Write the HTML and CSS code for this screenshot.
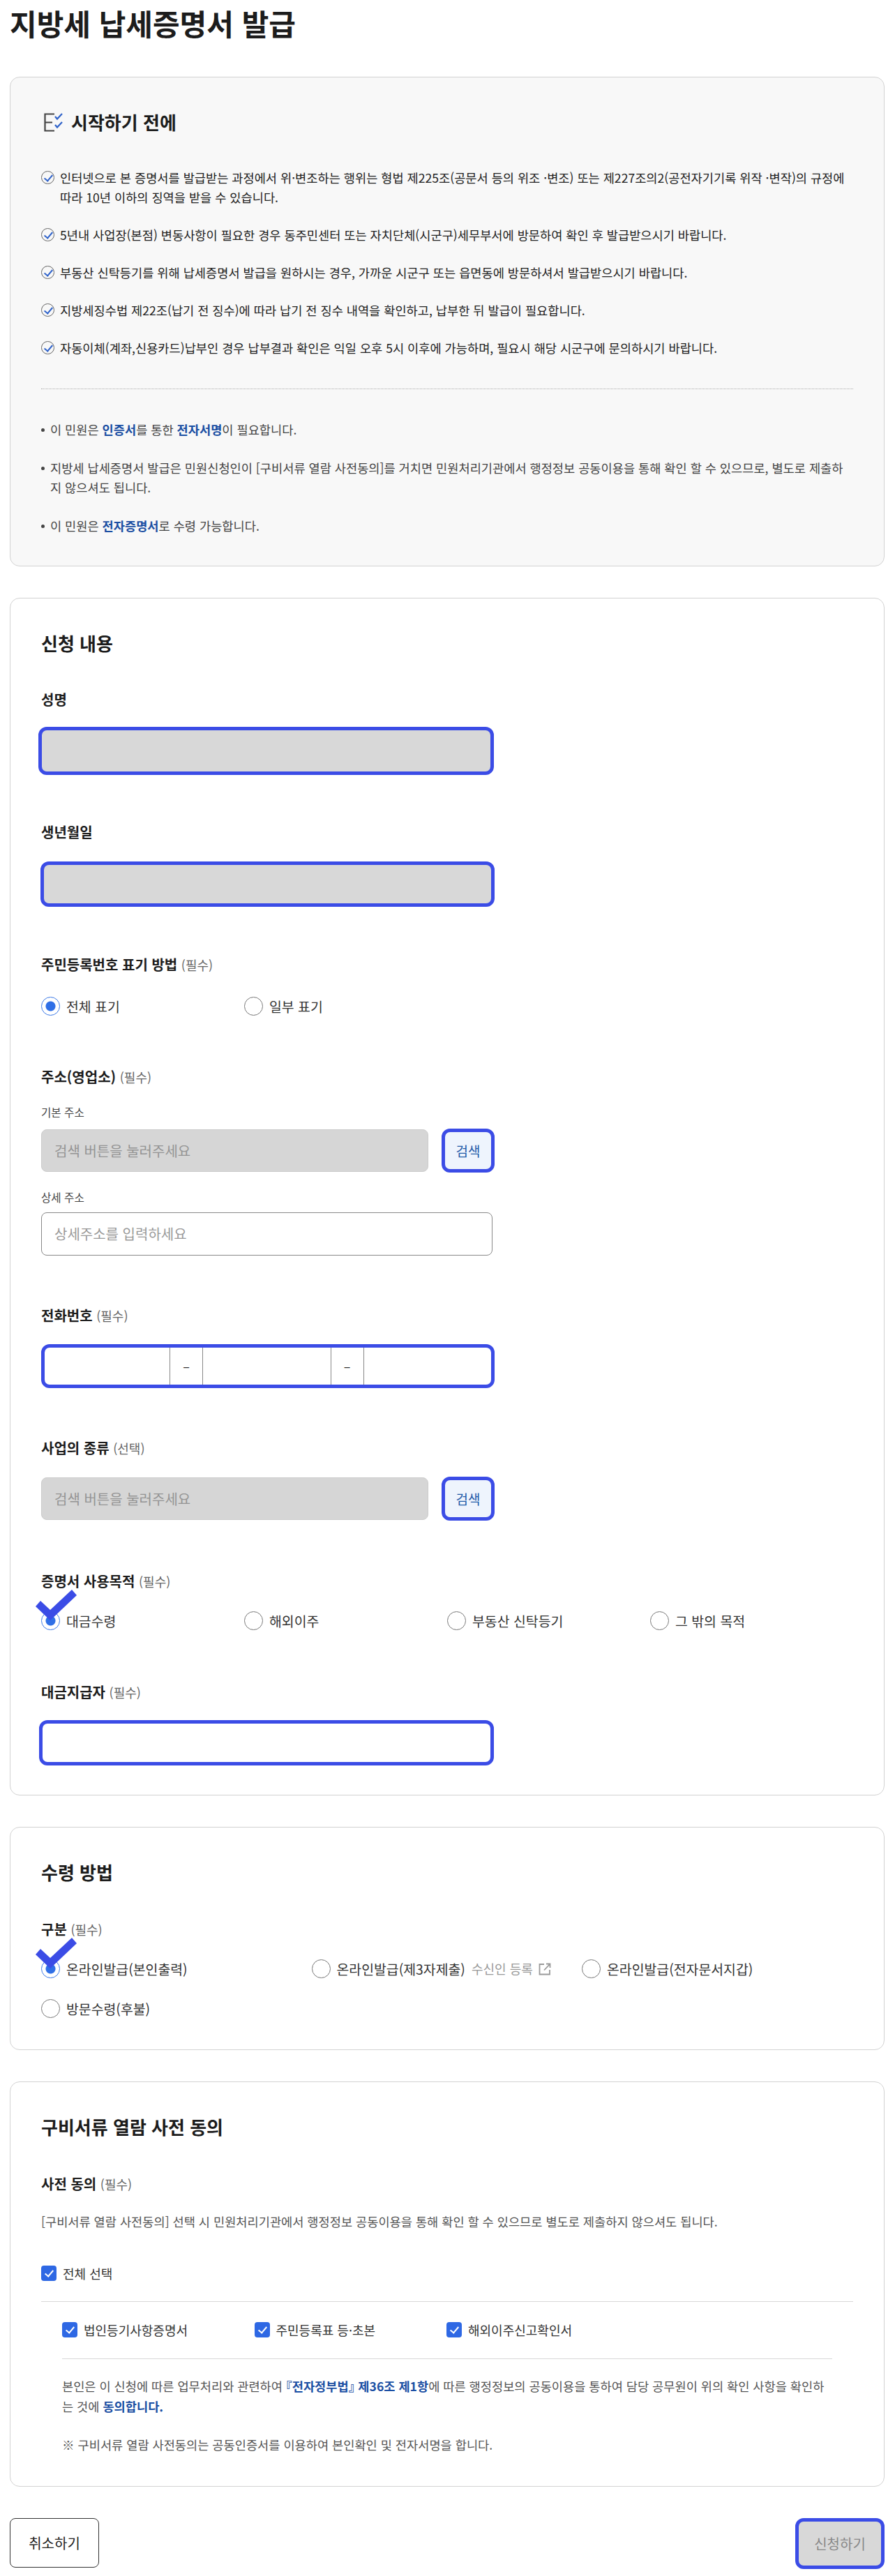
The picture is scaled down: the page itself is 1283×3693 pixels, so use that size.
FILE: index.html
```html
<!DOCTYPE html>
<html lang="ko">
  <head>
    <meta charset="utf-8">
    <title>지방세 납세증명서 발급</title>
    <link rel="stylesheet" href="styles.css">
  </head>
  <body>
    <h1>지방세 납세증명서 발급</h1>

    <section class="card notice">
      <h2 class="noticeTitle">
        <svg class="listIcon" width="28" height="27" viewBox="0 0 28 27" fill="none">
          <path d="M15 1.5H1.5V25.5H15M1.5 13.5H12" stroke="#444" stroke-width="2.2"/>
          <path d="M16 5l3 3.5L26 1M16 17l3 3.5L26 13" stroke="#2f62c9" stroke-width="2.2"/>
        </svg>
        시작하기 전에
      </h2>
      <ul class="checkList">
        <li>인터넷으로 본 증명서를 발급받는 과정에서 위·변조하는 행위는 형법 제225조(공문서 등의 위조 ·변조) 또는 제227조의2(공전자기기록 위작 ·변작)의 규정에 따라 10년 이하의 징역을 받을 수 있습니다.</li>
        <li>5년내 사업장(본점) 변동사항이 필요한 경우 동주민센터 또는 자치단체(시군구)세무부서에 방문하여 확인 후 발급받으시기 바랍니다.</li>
        <li>부동산 신탁등기를 위해 납세증명서 발급을 원하시는 경우, 가까운 시군구 또는 읍면동에 방문하셔서 발급받으시기 바랍니다.</li>
        <li>지방세징수법 제22조(납기 전 징수)에 따라 납기 전 징수 내역을 확인하고, 납부한 뒤 발급이 필요합니다.</li>
        <li>자동이체(계좌,신용카드)납부인 경우 납부결과 확인은 익일 오후 5시 이후에 가능하며, 필요시 해당 시군구에 문의하시기 바랍니다.</li>
      </ul>
      <hr class="dotted">
      <ul class="dotList">
        <li>이 민원은 <b>인증서</b>를 통한 <b>전자서명</b>이 필요합니다.</li>
        <li>지방세 납세증명서 발급은 민원신청인이 [구비서류 열람 사전동의]를 거치면 민원처리기관에서 행정정보 공동이용을 통해 확인 할 수 있으므로, 별도로 제출하지 않으셔도 됩니다.</li>
        <li>이 민원은 <b>전자증명서</b>로 수령 가능합니다.</li>
      </ul>
    </section>

    <section class="card apply">
      <h2>신청 내용</h2>

      <div class="field fName">
        <div class="label">성명</div>
        <div class="box boxName"></div>
      </div>

      <div class="field fBirth">
        <div class="label">생년월일</div>
        <div class="box boxBirth"></div>
      </div>

      <div class="field fIdType">
        <div class="label">주민등록번호 표기 방법 <small>(필수)</small></div>
        <div class="radios four">
          <div class="radio on"><i></i>전체 표기</div>
          <div class="radio"><i></i>일부 표기</div>
        </div>
      </div>

      <div class="field fAddr">
        <div class="label">주소(영업소) <small>(필수)</small></div>
        <div class="subLabel">기본 주소</div>
        <div class="searchRow">
          <div class="input disabled">검색 버튼을 눌러주세요</div>
          <button class="searchBtn">검색</button>
        </div>
        <div class="subLabel second">상세 주소</div>
        <div class="input wide">상세주소를 입력하세요</div>
      </div>

      <div class="field fPhone">
        <div class="label">전화번호 <small>(필수)</small></div>
        <div class="phone">
          <div class="phoneCell first"></div>
          <div class="phoneDash">–</div>
          <div class="phoneCell"></div>
          <div class="phoneDash">–</div>
          <div class="phoneCell"></div>
        </div>
      </div>

      <div class="field fBiz">
        <div class="label">사업의 종류 <small>(선택)</small></div>
        <div class="searchRow">
          <div class="input disabled">검색 버튼을 눌러주세요</div>
          <button class="searchBtn">검색</button>
        </div>
      </div>

      <div class="field fPurpose">
        <div class="label">증명서 사용목적 <small>(필수)</small></div>
        <div class="radios four">
          <div class="radio on">
            <i></i>대금수령
            <svg class="bigCheck" width="60" height="45" viewBox="0 0 60 45"><path d="M0 24L7 16L21 29L52 0L59 8L21 44Z" fill="#3b4ce6"/></svg>
          </div>
          <div class="radio"><i></i>해외이주</div>
          <div class="radio"><i></i>부동산 신탁등기</div>
          <div class="radio"><i></i>그 밖의 목적</div>
        </div>
      </div>

      <div class="field fPayer">
        <div class="label">대금지급자 <small>(필수)</small></div>
        <div class="box boxPayer"></div>
      </div>
    </section>

    <section class="card">
      <h2>수령 방법</h2>
      <div class="field fKind">
        <div class="label">구분 <small>(필수)</small></div>
        <div class="radios three">
          <div class="radio on">
            <i></i>온라인발급(본인출력)
            <svg class="bigCheck" width="60" height="45" viewBox="0 0 60 45"><path d="M0 24L7 16L21 29L52 0L59 8L21 44Z" fill="#3b4ce6"/></svg>
          </div>
          <div class="radio">
            <i></i>온라인발급(제3자제출)
            <span class="linkNote">수신인 등록
              <svg width="18" height="18" viewBox="0 0 18 18" fill="none" stroke="#999" stroke-width="1.8"><path d="M8 2H1.5V16.5H16V10M8 10.5L16.5 1.5M11 1.5H16.5V7"/></svg>
            </span>
          </div>
          <div class="radio"><i></i>온라인발급(전자문서지갑)</div>
          <div class="radio"><i></i>방문수령(후불)</div>
        </div>
      </div>
    </section>

    <section class="card">
      <h2>구비서류 열람 사전 동의</h2>
      <div class="field fConsent">
        <div class="label">사전 동의 <small>(필수)</small></div>
        <p class="consentText">[구비서류 열람 사전동의] 선택 시 민원처리기관에서 행정정보 공동이용을 통해 확인 할 수 있으므로 별도로 제출하지 않으셔도 됩니다.</p>
        <label class="check all"><i></i>전체 선택</label>
        <hr class="line">
        <div class="consentBody">
          <div class="checkRow">
            <label class="check"><i></i>법인등기사항증명서</label>
            <label class="check"><i></i>주민등록표 등·초본</label>
            <label class="check"><i></i>해외이주신고확인서</label>
          </div>
          <hr class="line">
          <p class="agree">본인은 이 신청에 따른 업무처리와 관련하여 <b>『전자정부법』 제36조 제1항</b>에 따른 행정정보의 공동이용을 통하여 담당 공무원이 위의 확인 사항을 확인하는 것에 <b>동의합니다.</b></p>
          <p class="agree note">※ 구비서류 열람 사전동의는 공동인증서를 이용하여 본인확인 및 전자서명을 합니다.</p>
        </div>
      </div>
    </section>

    <div class="actions">
      <button class="cancelBtn">취소하기</button>
      <button class="submitBtn">신청하기</button>
    </div>
  </body>
</html>
```

FILE: styles.css
```css
body{
    margin:0;
    padding:0 15px 11px 14px;
    font-family:"Noto Sans CJK KR","Noto Sans",sans-serif;
    color:#222;
    background:#fff;
}
h1{
    margin:8px 0 52px 0;
    font-size:42px;
    line-height:50px;
    font-weight:700;
    color:#1c1c1c;
}
h2{
    margin:0;
    font-size:26px;
    line-height:36px;
    font-weight:700;
    color:#1c1c1c;
}
button{
    font-family:inherit;
    cursor:pointer;
}

.card{
    margin-bottom:45px;
    padding:46px 44px 45px 44px;
    border:1px solid #d2d2d2;
    border-radius:14px;
    background:#fff;
}
.notice{
    padding-bottom:43px;
    background:#f8f8f8;
}
.apply{
    padding-bottom:42px;
}
.noticeTitle{
    display:flex;
    align-items:center;
    gap:11px;
    margin-left:4px;
}

/* notice lists */
.checkList,.dotList{
    list-style:none;
    margin:0;
    padding:0;
    font-size:17.6px;
    line-height:28px;
}
.checkList{
    margin-top:48px;
}
.checkList li{
    position:relative;
    padding-left:27px;
    margin-bottom:26px;
}
.checkList li:last-child{
    margin-bottom:0;
}
.checkList li::before{
    content:"";
    position:absolute;
    left:0;
    top:4px;
    width:17px;
    height:17px;
    border:1.5px solid #666;
    border-radius:50%;
}
.checkList li::after{
    content:"";
    position:absolute;
    left:7px;
    top:7px;
    width:5px;
    height:10px;
    border:solid #2f62c9;
    border-width:0 2px 2px 0;
    transform:rotate(40deg);
}
.dotted{
    margin:44px 0 44px 0;
    border:0;
    border-top:1px dotted #aaa;
}
.dotList{
    color:#444;
}
.dotList li{
    position:relative;
    padding-left:13px;
    margin-bottom:27px;
}
.dotList li:last-child{
    margin-bottom:0;
}
.dotList li::before{
    content:"";
    position:absolute;
    left:0;
    top:12px;
    width:5px;
    height:5px;
    border-radius:50%;
    background:#444;
}
.dotList b,.agree b{
    color:#1b4fa3;
    font-weight:700;
    font-feature-settings:"halt";
}

/* form fields */
.field{
    --label-gap:26px;
}
.label{
    margin-bottom:var(--label-gap);
    font-size:20px;
    line-height:30px;
    font-weight:700;
    color:#1c1c1c;
}
.label small{
    font-size:18px;
    line-height:1;
    font-weight:400;
    color:#666;
}
.fName{margin-top:48px;--label-gap:24px;}
.fBirth{margin-top:67px;--label-gap:27px;}
.fIdType{margin-top:68px;--label-gap:31px;}
.fAddr{margin-top:73px;--label-gap:23px;}
.fPhone{margin-top:71px;}
.fBiz{margin-top:71px;}
.fPurpose{margin-top:72px;--label-gap:28px;}
.fPayer{margin-top:74px;--label-gap:25px;}
.fKind{margin-top:49px;--label-gap:28px;}
.fConsent{margin-top:49px;--label-gap:25px;}

.box{
    box-sizing:border-box;
    border:5px solid #3b4ce6;
    border-radius:12px;
}
.boxName{
    width:653px;
    height:69px;
    margin-left:-4px;
    background:#d8d8d8;
}
.boxBirth{
    width:651px;
    height:65px;
    margin-left:-1px;
    background:#d8d8d8;
}
.boxPayer{
    width:652px;
    height:65px;
    margin-left:-3px;
    background:#fff;
}

.subLabel{
    margin-bottom:12px;
    font-size:15.6px;
    line-height:24px;
    color:#444;
}
.subLabel.second{
    margin-top:23px;
    margin-bottom:10px;
}
.searchRow{
    display:flex;
    align-items:center;
    justify-content:space-between;
    width:650px;
}
.input{
    box-sizing:border-box;
    height:61px;
    padding:0 18px;
    border:1px solid #ccc;
    border-radius:8px;
    font-size:20px;
    line-height:59px;
    color:#999;
}
.input.disabled{
    width:555px;
    background:#d6d6d6;
    color:#949494;
}
.input.wide{
    width:647px;
    height:62px;
    border-color:#888;
    background:#fff;
}
.searchBtn{
    box-sizing:border-box;
    width:76px;
    height:63px;
    padding:0;
    border:5px solid #3b4ce6;
    border-radius:12px;
    background:#eef4fd;
    font-size:19px;
    color:#1f5aa8;
}

.phone{
    box-sizing:border-box;
    display:flex;
    width:650px;
    height:63px;
    border:5px solid #3b4ce6;
    border-radius:12px;
    background:#fff;
}
.phoneCell{
    flex:1;
}
.phoneCell.first{
    flex:none;
    width:179px;
}
.phoneDash{
    box-sizing:border-box;
    width:48px;
    border-left:1px solid #888;
    border-right:1px solid #888;
    text-align:center;
    font-size:18px;
    line-height:53px;
    color:#333;
}

/* radios */
.radios{
    display:grid;
    row-gap:30px;
}
.radios.four{
    grid-template-columns:repeat(4,291px);
}
.radios.three{
    grid-template-columns:repeat(3,387.5px);
}
.radio{
    position:relative;
    display:flex;
    align-items:center;
    height:27px;
    font-size:19.4px;
    line-height:27px;
    color:#333;
}
.radio i{
    box-sizing:border-box;
    flex:none;
    display:block;
    width:27px;
    height:27px;
    margin-right:9px;
    border:1px solid #777;
    border-radius:50%;
    background:#fff;
}
.radio.on i{
    border-color:#3a78e6;
    background:radial-gradient(circle,#2f6fe6 0,#2f6fe6 6.5px,#fff 7.5px);
}
.bigCheck{
    position:absolute;
    left:-8px;
    top:-31px;
}
.linkNote{
    display:inline-flex;
    align-items:center;
    gap:8px;
    margin-left:9px;
    font-size:18px;
    color:#999;
}

/* consent */
.consentText{
    margin:0 0 46px 0;
    font-size:17.6px;
    line-height:28px;
    color:#555;
}
.check{
    display:flex;
    align-items:center;
    height:28px;
    font-size:18px;
    color:#333;
}
.check i{
    position:relative;
    flex:none;
    display:block;
    width:22px;
    height:22px;
    margin-right:9px;
    border-radius:4px;
    background:#2e68e4;
}
.check i::after{
    content:"";
    position:absolute;
    left:8px;
    top:4px;
    width:5px;
    height:10px;
    border:solid #fff;
    border-width:0 2px 2px 0;
    transform:rotate(40deg);
}
.line{
    margin:26px 0;
    border:0;
    border-top:1px solid #d8d8d8;
}
.consentBody{
    padding:0 30px;
}
.checkRow{
    display:grid;
    grid-template-columns:repeat(3,275.5px);
}
.consentBody .line{
    margin:27px 0 24px 0;
}
.agree{
    margin:0;
    font-size:17.6px;
    line-height:29px;
    color:#555;
}
.agree.note{
    margin-top:26px;
}

.actions{
    display:flex;
    justify-content:space-between;
    margin-top:44px;
}
.cancelBtn,.submitBtn{
    box-sizing:border-box;
    width:128px;
    font-size:20px;
    padding:0;
}
.cancelBtn{
    height:71px;
    border:1px solid #333;
    border-radius:8px;
    background:#fff;
    color:#222;
}
.submitBtn{
    height:73px;
    border:5px solid #3b4ce6;
    border-radius:12px;
    background:#d8d8d8;
    color:#888;
}
```
